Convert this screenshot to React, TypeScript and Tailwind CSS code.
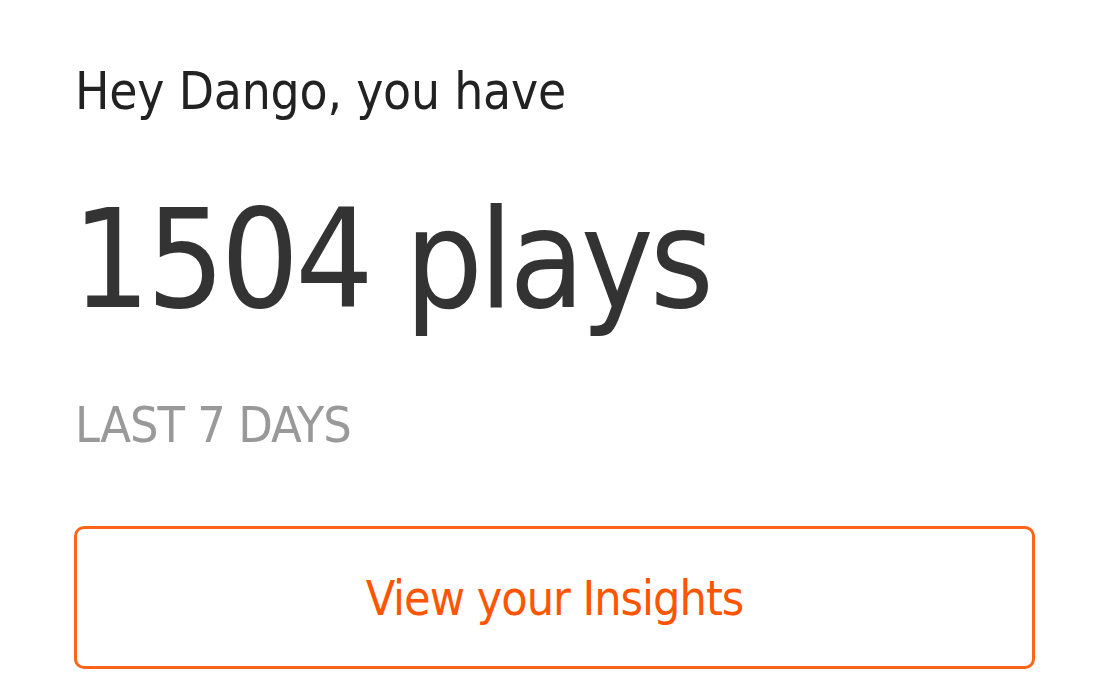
import React from 'react';

const font = { fontFamily: '"DejaVu Sans Condensed", "DejaVu Sans", "Liberation Sans", sans-serif' };

export default function App() {
  return (
    <div className="w-[1100px] h-[700px] bg-white overflow-hidden" style={font}>
      <div className="flex flex-col pl-[74px] pr-[65px] pt-[60px]">
        <p className="ml-[1px] text-[51px] leading-[64px] text-[#222] tracking-[-0.2px]">Hey Dango, you have</p>
        <p className="mt-[61px] text-[137px] leading-[150px] text-[#333] tracking-[-4px] -ml-[2px]">1504 plays</p>
        <p className="mt-[58px] ml-[1px] text-[50px] leading-[64px] text-[#999] uppercase tracking-[-1px]">Last 7 days</p>
        <button className="mt-[69px] h-[143px] w-full rounded-[10px] border-[3px] border-[#ff6419] bg-white text-[48px] text-[#ff5500] tracking-[-1px]">
          View your Insights
        </button>
      </div>
    </div>
  );
}
